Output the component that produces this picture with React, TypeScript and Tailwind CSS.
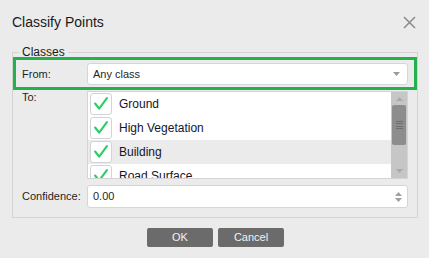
import React from 'react';

const items = ['Ground', 'High Vegetation', 'Building', 'Road Surface'];

function Check() {
  return (
    <svg width="22" height="22" viewBox="0 0 22 22" className="block">
      <path d="M4.5 10.5 L9 16 L17.5 4.5" fill="none" stroke="#2fcc6a" strokeWidth="2.4" strokeLinecap="round" strokeLinejoin="round" />
    </svg>
  );
}

function Tri({ down, color, w = 7, h = 4 }: { down?: boolean; color: string; w?: number; h?: number }) {
  return (
    <svg width={w} height={h} viewBox={`0 0 ${w} ${h}`} className="block">
      <polygon points={down ? `0,0 ${w},0 ${w / 2},${h}` : `0,${h} ${w},${h} ${w / 2},0`} fill={color} />
    </svg>
  );
}

export default function App() {
  return (
    <div className="w-[429px] h-[258px] bg-[#ebebeb] flex flex-col font-['Liberation_Sans',Arial,sans-serif] text-[#1f1f1f]">
      {/* title bar */}
      <div className="h-[44px] flex items-center justify-between pl-[12px] pr-[13px] pt-[1px]">
        <span className="text-[14px] text-[#1a1a1a]">Classify Points</span>
        <svg width="13" height="13" viewBox="0 0 13 13" className="block">
          <path d="M1 1 L12 12 M12 1 L1 12" stroke="#8a8a8a" strokeWidth="1.5" />
        </svg>
      </div>

      <fieldset className="mt-[3px] mx-[12px] w-[406px] border border-[#d3d3d3] pb-[9px]">
        <legend className="ml-[6px] px-[3px] text-[12px] leading-[10px] text-[#1a1a1a]">Classes</legend>

        {/* From row (highlighted) */}
        <div className="h-[33px] border-[3px] border-[#22b14c] flex items-start pt-[3px] pl-[6px] pr-[6px]">
          <span className="w-[65px] text-[11px] leading-[22px]">From:</span>
          <div className="flex-1 h-[22px] bg-white border border-[#d6d6d6] rounded-[3px] flex items-center justify-between pl-[5px] pr-[7px]">
            <span className="text-[11px]">Any class</span>
            <Tri down color="#9a9a9a" w={7} h={4} />
          </div>
        </div>

        {/* To row */}
        <div className="flex mt-[1px] pl-[9px] pr-[9px]">
          <span className="w-[65px] text-[11px] leading-[13px]">To:</span>
          <div className="flex-1 h-[88px] bg-white border border-[#d4d4d4] flex">
            <div className="flex-1 overflow-hidden">
              {items.map((it, i) => (
                <div key={it} className={`h-[24px] flex items-center pl-[2px] ${i === 2 ? 'bg-[#ebebeb]' : 'bg-white'}`}>
                  <div className="w-[22px] h-[22px] bg-white border border-[#d3d3d3] rounded-[3px] flex items-center justify-center">
                    <Check />
                  </div>
                  <span className="ml-[7px] text-[12px] text-[#14142a]">{it}</span>
                </div>
              ))}
            </div>
            <div className="w-[16px] bg-[#c6c6c6] flex flex-col items-center">
              <div className="h-[13px] flex items-center justify-center pt-[1px]">
                <Tri color="#a9a9a9" w={7} h={4} />
              </div>
              <div className="w-[14px] h-[40px] bg-[#8d8d8d] rounded-[2px] flex flex-col items-center justify-center gap-[1.5px]">
                <div className="w-[7px] h-[1px] bg-[#6e6e6e]" />
                <div className="w-[7px] h-[1px] bg-[#6e6e6e]" />
                <div className="w-[7px] h-[1px] bg-[#6e6e6e]" />
                <div className="w-[7px] h-[1px] bg-[#6e6e6e]" />
              </div>
              <div className="flex-1 flex items-end justify-center pb-[5px]">
                <Tri down color="#a9a9a9" w={7} h={4} />
              </div>
            </div>
          </div>
        </div>

        {/* Confidence row */}
        <div className="flex items-center mt-[6px] pl-[9px] pr-[9px]">
          <span className="w-[65px] text-[11px]">Confidence:</span>
          <div className="flex-1 h-[23px] bg-white border border-[#d6d6d6] rounded-[3px] flex items-center justify-between pl-[5px] pr-[5px]">
            <span className="text-[11px]">0.00</span>
            <div className="flex flex-col gap-[2px]">
              <Tri color="#a0a0a0" w={7} h={4} />
              <Tri down color="#a0a0a0" w={7} h={4} />
            </div>
          </div>
        </div>
      </fieldset>

      {/* buttons */}
      <div className="flex justify-center gap-[5px] mt-[10px] pl-[2px]">
        <button className="w-[66px] h-[19px] bg-[#6b6b6b] rounded-[2px] text-[11px] text-[#f2f2f2]">OK</button>
        <button className="w-[66px] h-[19px] bg-[#6b6b6b] rounded-[2px] text-[11px] text-[#f2f2f2]">Cancel</button>
      </div>
    </div>
  );
}
